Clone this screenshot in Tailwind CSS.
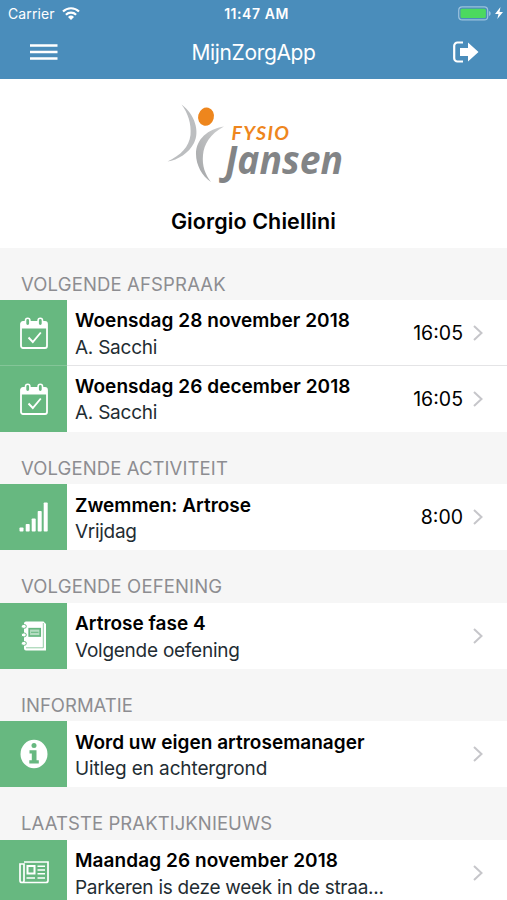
<!DOCTYPE html>
<html lang="nl">
<head>
  <meta charset="UTF-8" />
  <meta name="viewport" content="width=device-width, initial-scale=1.0"/>
  <title>MijnZorgApp</title>
  <script src="https://cdn.jsdelivr.net/npm/@tailwindcss/browser@4"></script>
</head>
<body class="bg-[#f6f6f6] h-screen overflow-hidden font-['Inter','Liberation_Sans',sans-serif] text-black">

  <!-- Shared icons -->
  <svg class="hidden">
    <symbol id="chevron" viewBox="0 0 10 16">
      <path d="M1 1l7.500 7L1 15" fill="none" stroke="#c6c6ca" stroke-width="2"/>
    </symbol>
    <symbol id="calendar" viewBox="0 0 28 32">
      <path d="M3 5h22a2 2 0 0 1 2 2v22a2 2 0 0 1-2 2H3a2 2 0 0 1-2-2V7a2 2 0 0 1 2-2z" fill="none" stroke="#fff" stroke-width="1.800"/>
      <path d="M1 6h26v5.500H1z" fill="#fff"/>
      <rect x="5.500" y="1.200" width="4.400" height="7.600" rx="2.200" fill="#67b880" stroke="#fff" stroke-width="1.600"/>
      <rect x="18.100" y="1.200" width="4.400" height="7.600" rx="2.200" fill="#67b880" stroke="#fff" stroke-width="1.600"/>
      <path d="M8.500 20.500l4.300 4.500 8-9.500" fill="none" stroke="#fff" stroke-width="1.900"/>
    </symbol>
  </svg>

  <header class="h-[79px] bg-[#4a8dbb] text-white flex flex-col">
    <div class="h-7 grid grid-cols-3 items-center pl-2 pr-1">
      <div class="flex items-center gap-[7px] text-[14px] -mt-0.5">
        <span class="tracking-[0.1px]">Carrier</span>
        <svg class="w-[18px] h-[13px]" viewBox="0 0 18 13" fill="none" stroke="#fff" stroke-width="2.200">
          <path d="M1 4.500a11.500 11.500 0 0 1 16 0"/>
          <path d="M3.900 7.700a7.300 7.300 0 0 1 10.200 0"/>
          <path d="M9 13l-3-3a4.300 4.300 0 0 1 6 0z" fill="#fff" stroke="none"/>
        </svg>
      </div>
      <div class="text-center text-[14px] tracking-[0.550px] font-semibold whitespace-nowrap pl-0.5 -mt-0.5">11:47 AM</div>
      <div class="flex items-center justify-end gap-1 -mt-0.5">
        <svg class="w-[33px] h-[15px]" viewBox="0 0 33 15">
          <rect x="0.700" y="0.900" width="29" height="13" rx="3.500" fill="none" stroke="#9bc2dd" stroke-width="1.200"/>
          <rect x="2.500" y="2.700" width="25.400" height="9.400" rx="1.500" fill="#4cd95f"/>
          <path d="M31 5v5c1.300-.6 1.700-1.500 1.700-2.500S32.300 5.600 31 5z" fill="#9bc2dd"/>
        </svg>
        <svg class="w-[8px] h-[12px]" viewBox="0 0 8 12"><path d="M5.500 0L0 7h3.500L2.300 12 8 5H4.500z" fill="#fff"/></svg>
      </div>
    </div>
    <div class="h-[49px] flex items-center justify-between pl-[30px] pr-[28px] pb-px">
      <svg class="w-[28px] h-[16px]" viewBox="0 0 28 16"><path d="M0 1.500h27.500M0 8h27.500M0 14.500h27.500" stroke="#fff" stroke-width="2.500"/></svg>
      <h1 class="text-[21px] tracking-[-0.350px] -ml-1 pt-0.5">MijnZorgApp</h1>
      <svg class="w-[26px] h-[22px]" viewBox="0 0 26 22">
        <path d="M10 1.500H4.500a3.300 3.300 0 0 0-3.300 3.300v12.400a3.300 3.300 0 0 0 3.300 3.300H10" fill="none" stroke="#fff" stroke-width="2.200"/>
        <path d="M7 7h8V1.500L25.500 11 15 20.500V15H7z" fill="#fff"/>
      </svg>
    </div>
  </header>

  <div class="h-[169px] bg-white flex flex-col items-center pt-[23px]">
    <svg class="w-[180px] h-[84px] overflow-visible" viewBox="0 0 180 84">
      <defs>
        <linearGradient id="silver" x1="0" y1="1" x2="1" y2="0">
          <stop offset="0" stop-color="#a2a4a6"/>
          <stop offset="1" stop-color="#cfd0d1"/>
        </linearGradient>
      </defs>
      <path d="M17.500 2.500C31 12 36 30 30 41C25 51 14 58 3.500 59.500C17 53 25 45 26.500 33C27.500 22 24 11 17.500 2.500z" fill="#bcbec0"/>
      <path d="M60 24.500C44 27 32 37 32 52C32 63 38 74 47 80C41 72 38 64 39 53C40 42 46 32 60 24.500z" fill="url(#silver)"/>
      <ellipse cx="42" cy="14.700" rx="7.900" ry="9.200" transform="rotate(15 42 14.700)" fill="#ee861d"/>
      <text x="67.500" y="37.500" font-family="Lato, sans-serif" font-style="italic" font-weight="700" font-size="19.500" textLength="57.500" fill="#ee861d">FYSIO</text>
      <text x="61" y="72" font-family="Open Sans, sans-serif" font-style="italic" font-weight="700" font-size="39" textLength="118" lengthAdjust="spacingAndGlyphs" fill="#828486">Jansen</text>
    </svg>
    <h2 class="mt-[21px] text-[21.500px] leading-7 font-semibold tracking-[0.100px]">Giorgio Chiellini</h2>
  </div>

  <main class="text-[19px] leading-[26px]">
    <section>
      <h3 class="h-[52px] pt-[23px] pl-[21px] text-[18.500px] tracking-[0.150px] text-[#8d8d91]">VOLGENDE AFSPRAAK</h3>
      <div class="h-[66px] bg-white flex">
        <div class="w-[67px] bg-[#67b880] flex items-center justify-center border-b border-[#84c598]"><svg class="w-[28px] h-[32px]"><use href="#calendar"/></svg></div>
        <div class="flex-1 flex items-center pl-2 pr-6 border-b border-[#e4e4e6]">
          <div class="flex-1 pt-[3px]">
            <p class="font-semibold tracking-[0.060px]">Woensdag 28 november 2018</p>
            <p class="text-[#1f2d33] tracking-[-0.250px] pt-px -mb-px">A. Sacchi</p>
          </div>
          <span class="mr-[10px] text-[19.500px]">16:05</span>
          <svg class="w-[10px] h-[16px]"><use href="#chevron"/></svg>
        </div>
      </div>
      <div class="h-[66px] bg-white flex">
        <div class="w-[67px] bg-[#67b880] flex items-center justify-center"><svg class="w-[28px] h-[32px]"><use href="#calendar"/></svg></div>
        <div class="flex-1 flex items-center pl-2 pr-6">
          <div class="flex-1 pt-[2px]">
            <p class="font-semibold tracking-[0.060px]">Woensdag 26 december 2018</p>
            <p class="text-[#1f2d33] tracking-[-0.250px]">A. Sacchi</p>
          </div>
          <span class="mr-[10px] text-[19.500px]">16:05</span>
          <svg class="w-[10px] h-[16px]"><use href="#chevron"/></svg>
        </div>
      </div>
    </section>

    <section>
      <h3 class="h-[52.400px] pt-[23px] pl-[21px] text-[18.500px] tracking-[0.100px] text-[#8d8d91]">VOLGENDE ACTIVITEIT</h3>
      <div class="h-[66px] bg-white flex">
        <div class="w-[67px] bg-[#67b880] flex items-center justify-center">
          <svg class="w-[30px] h-[30px]" viewBox="0 0 30 30" fill="#fff">
            <rect x="0.500" y="25.500" width="4" height="4" rx="0.800"/>
            <rect x="6.700" y="22" width="4" height="7.500" rx="0.800"/>
            <rect x="12.700" y="16.500" width="4" height="13" rx="0.800"/>
            <rect x="18.700" y="9" width="4" height="20.500" rx="0.800"/>
            <rect x="24.700" y="0.500" width="4" height="29" rx="0.800"/>
          </svg>
        </div>
        <div class="flex-1 flex items-center pl-2 pr-6">
          <div class="flex-1 pt-[3px]">
            <p class="font-semibold">Zwemmen: Artrose</p>
            <p class="text-[#1f2d33] tracking-[-0.300px]">Vrijdag</p>
          </div>
          <span class="mr-[10px] text-[19.500px]">8:00</span>
          <svg class="w-[10px] h-[16px]"><use href="#chevron"/></svg>
        </div>
      </div>
    </section>

    <section>
      <h3 class="h-[52.400px] pt-[23px] pl-[21px] text-[18.500px] tracking-[0.150px] text-[#8d8d91]">VOLGENDE OEFENING</h3>
      <div class="h-[66px] bg-white flex">
        <div class="w-[67px] bg-[#67b880] flex items-center justify-center">
          <svg class="w-[26px] h-[30px]" viewBox="0 0 26 30">
            <path d="M5 0.500h17.500l2.500 2.500v26.500H5a2 2 0 0 1-2-2v-25a2 2 0 0 1 2-2z" fill="#fff"/>
            <path d="M22.300 2v24.800H5" fill="none" stroke="#67b880" stroke-width="0.700"/>
            <rect x="8.200" y="7.700" width="11" height="7.300" fill="#b5dcc1" stroke="#67b880" stroke-width="1.700"/>
            <path d="M10 11.300h7.500" stroke="#67b880"/>
            <g fill="#fff" stroke="#67b880" stroke-width="1">
              <rect x="0.300" y="3.500" width="5" height="3.800" rx="1.900"/>
              <rect x="0.300" y="12" width="5" height="3.800" rx="1.900"/>
              <rect x="0.300" y="20.500" width="5" height="3.800" rx="1.900"/>
            </g>
          </svg>
        </div>
        <div class="flex-1 flex items-center pl-2 pr-6">
          <div class="flex-1 pt-[3px]">
            <p class="font-semibold">Artrose fase 4</p>
            <p class="text-[#1f2d33] tracking-[-0.250px] pt-px -mb-px">Volgende oefening</p>
          </div>
          <svg class="w-[10px] h-[16px]"><use href="#chevron"/></svg>
        </div>
      </div>
    </section>

    <section>
      <h3 class="h-[52.400px] pt-[23px] pl-[21px] text-[18.500px] text-[#8d8d91]">INFORMATIE</h3>
      <div class="h-[66px] bg-white flex">
        <div class="w-[67px] bg-[#67b880] flex items-center justify-center">
          <svg class="w-[28px] h-[30px]" viewBox="0 0 28 30">
            <ellipse cx="14" cy="15" rx="13.500" ry="14.300" fill="#fff"/>
            <circle cx="14" cy="6.400" r="2.500" fill="#67b880"/>
            <path d="M9.500 11.300h7v10h2.300v3.200H9.300v-3.200h2.500v-6.800H9.500z" fill="#67b880"/>
          </svg>
        </div>
        <div class="flex-1 flex items-center pl-2 pr-6">
          <div class="flex-1 pt-[3px]">
            <p class="font-semibold tracking-[0.020px]">Word uw eigen artrosemanager</p>
            <p class="text-[#1f2d33] tracking-[-0.120px]">Uitleg en achtergrond</p>
          </div>
          <svg class="w-[10px] h-[16px]"><use href="#chevron"/></svg>
        </div>
      </div>
    </section>

    <section>
      <h3 class="h-[52.400px] pt-[23px] pl-[21px] text-[18.500px] tracking-[0.080px] text-[#8d8d91]">LAATSTE PRAKTIJKNIEUWS</h3>
      <div class="h-[66px] bg-white flex">
        <div class="w-[67px] bg-[#67b880] flex items-center justify-center">
          <svg class="w-[30px] h-[23px]" viewBox="0 0 30 23" fill="none" stroke="#fff" stroke-width="1.700">
            <path d="M5 1h24v18.500a2 2 0 0 1-2 2H3a2 2 0 0 1-2-2V3h4v16a2 2 0 0 1-2 2.500"/>
            <rect x="8.500" y="5" width="7" height="7.500" stroke-width="2"/>
            <path d="M18.500 5.200H26M18.500 9H26M18.500 12.700H26M7.500 17H16M18.500 17H26" stroke-width="1.600"/>
          </svg>
        </div>
        <div class="flex-1 flex items-center pl-2 pr-6">
          <div class="flex-1 pt-[3px]">
            <p class="font-semibold tracking-[0.080px]">Maandag 26 november 2018</p>
            <p class="text-[#1f2d33] tracking-[-0.270px] pt-px -mb-px">Parkeren is deze week in de straa...</p>
          </div>
          <svg class="w-[10px] h-[16px]"><use href="#chevron"/></svg>
        </div>
      </div>
    </section>
  </main>

</body>
</html>
